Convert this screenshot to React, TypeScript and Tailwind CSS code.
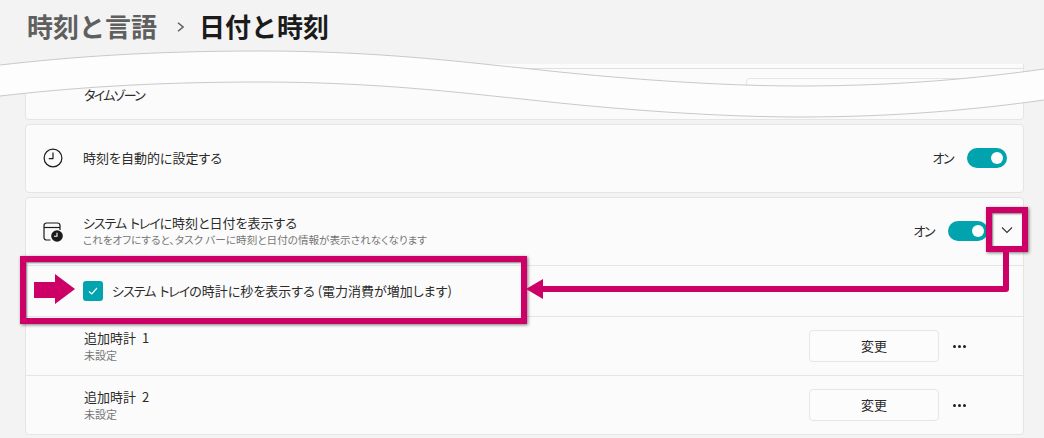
import { ReactNode } from "react";

const font = "font-['Noto_Sans_CJK_JP','Noto_Sans',sans-serif] [font-feature-settings:'palt']";

function Toggle() {
  return (
    <div className="w-10 h-5 rounded-full bg-[#00a3ae] flex items-center justify-end pr-1">
      <div className="w-3 h-3 rounded-full bg-white" />
    </div>
  );
}

function ClockIcon() {
  return (
    <svg width="20" height="20" viewBox="0 0 20 20" fill="none" stroke="#1b1b1b" strokeWidth="1.2">
      <circle cx="10" cy="10" r="8.9" />
      <path d="M10 4.5V10.6H5.8" strokeLinejoin="round" />
    </svg>
  );
}

function CalendarClockIcon() {
  return (
    <svg width="20" height="20" viewBox="0 0 20 20" fill="none" stroke="#1b1b1b" strokeWidth="1.2">
      <path d="M7.5 18H3.5A2.5 2.5 0 0 1 1 15.5V3.5A2.5 2.5 0 0 1 3.5 1H14.5A2.5 2.5 0 0 1 17 3.5V8" />
      <path d="M1 5.5H17" />
      <circle cx="14" cy="14" r="5.8" fill="#1b1b1b" stroke="none" />
      <path d="M14 10.8V14.3H11" stroke="#fff" strokeWidth="1.1" />
    </svg>
  );
}

function ClockRow({ label }: { label: ReactNode }) {
  return (
    <div className="h-[59px] flex items-center border-t border-[#e5e5e5] pl-[58px]">
      <div className="flex-1 -mt-[1px]">
        <div className="text-[13px] leading-[18px] text-[#2b2b2b]">{label}</div>
        <div className="text-[11px] leading-[16px] text-[#767676]">未設定</div>
      </div>
      <div className="w-[130px] h-8 rounded border border-[#e6e6e6] bg-[#fcfcfc] flex items-center justify-center text-[13px] text-[#2b2b2b]">
        変更
      </div>
      <div className="w-[13px] ml-[14px] mr-[57px] flex justify-between">
        <span className="w-[3px] h-[3px] rounded-full bg-[#1f1f1f]" />
        <span className="w-[3px] h-[3px] rounded-full bg-[#1f1f1f]" />
        <span className="w-[3px] h-[3px] rounded-full bg-[#1f1f1f]" />
      </div>
    </div>
  );
}

export default function App() {
  return (
    <div className={`relative w-[1044px] h-[438px] overflow-hidden bg-[#f3f3f3] ${font}`}>
      {/* Breadcrumb */}
      <div className="h-[64px] flex items-start pt-[7px] pl-[27px] text-[26px] leading-[38px] font-bold [font-feature-settings:normal]">
        <span className="text-[#5f5f5f]">時刻と言語</span>
        <svg className="ml-[20px] mr-[15px] mt-[15px]" width="7" height="10" viewBox="0 0 7 10" fill="none" stroke="#5f5f5f" strokeWidth="1.5">
          <path d="M1 .8L6 5L1 9.2" />
        </svg>
        <span className="text-[#1b1b1b]">日付と時刻</span>
      </div>

      <div className="ml-[25px] w-[999px] flex flex-col gap-[4px]">
        {/* Time zone card, cut off at the top */}
        <div className="h-[56px] bg-[#fbfbfb] border-x border-b border-[#e5e5e5] rounded-b">
          <div className="h-[5px] border-b border-[#e0e0e0]" />
          <div className="h-[50px] flex items-center pl-[58px] pr-[45px] justify-between">
            <span className="text-[13px] text-[#2b2b2b] tracking-[-1.7px] mt-[2px]">タイムゾーン</span>
            <div className="w-[232px] h-[30px] rounded border border-[#e5e5e5] bg-[#fcfcfc] -mt-[2px]" />
          </div>
        </div>

        {/* Automatic time */}
        <div className="h-[69px] bg-[#fbfbfb] border border-[#e5e5e5] rounded flex items-center pl-[17px] pr-[16px]">
          <div className="-mt-[2px]"><ClockIcon /></div>
          <span className="ml-[20px] flex-1 text-[13px] text-[#2b2b2b] -mt-[2px]">時刻を自動的に設定する</span>
          <span className="mr-[14px] text-[13px] text-[#2b2b2b] -mt-[2px] tracking-[-1.5px]">オン</span>
          <div className="-mt-[2px]"><Toggle /></div>
        </div>

        {/* System tray */}
        <div className="h-[238px] bg-[#fbfbfb] border border-[#e5e5e5] rounded flex flex-col">
          <div className="h-[67px] flex items-center pl-[17px]">
            <CalendarClockIcon />
            <div className="ml-[20px] flex-1 -mt-[2px]">
              <div className="text-[13px] leading-[18px] text-[#2b2b2b]">
                <span className="tracking-[-1.1px]">システム</span>
                <span className="ml-[4px] tracking-[-1.1px]">トレイ</span>に時刻と日付を表示する
              </div>
              <div className="text-[10.6px] leading-[15px] text-[#767676]">これをオフにすると、タスク バーに時刻と日付の情報が表示されなくなります</div>
            </div>
            <span className="mr-[14px] text-[13px] text-[#2b2b2b] -mt-[2px] tracking-[-1.5px]">オン</span>
            <div className="mr-[35px] -mt-[2px]"><Toggle /></div>
          </div>
          <div className="h-[51px] flex items-center border-t border-[#e5e5e5] pl-[57px]">
            <div className="w-5 h-5 rounded-[3px] bg-[#00a3ae] flex items-center justify-center">
              <svg width="12" height="12" viewBox="0 0 12 12" fill="none" stroke="#fff" strokeWidth="1.2">
                <path d="M2 6.5L4.8 9L10 3" />
              </svg>
            </div>
            <span className="ml-[9px] text-[13px] text-[#2b2b2b]">
              <span className="tracking-[-1px]">システム</span>
              <span className="ml-[4px] tracking-[-1px]">トレイ</span>の時計に秒を表示する (電力消費が増加します)
            </span>
          </div>
          <ClockRow label={<>追加時計 <span className="ml-[3px]">1</span></>} />
          <ClockRow label={<>追加時計 <span className="ml-[3px]">2</span></>} />
        </div>
      </div>

      {/* Torn paper band */}
      <svg className="absolute left-0 top-0 pointer-events-none" width="1044" height="130" viewBox="0 0 1044 130">
        <path
          d="M0 65C70 57 150 51 260 51C380 51 470 63 522 68C620 79 720 86 800 86C900 86 980 78 1044 69V100C980 109 900 117 800 117C720 117 620 110 522 99C470 94 380 82 260 82C150 82 70 88 0 96Z"
          fill="#fdfdfd"
        />
        <path d="M0 65C70 57 150 51 260 51C380 51 470 63 522 68C620 79 720 86 800 86C900 86 980 78 1044 69" fill="none" stroke="#c9c9c9" />
        <path d="M0 96C70 88 150 82 260 82C380 82 470 94 522 99C620 110 720 117 800 117C900 117 980 109 1044 100" fill="none" stroke="#c9c9c9" />
      </svg>

      {/* Annotations */}
      <div className="absolute left-[20px] top-[256px] w-[507px] h-[68px] border-[6px] border-[#cc0066] shadow-[1px_1px_3px_rgba(0,0,0,0.5),inset_1px_1px_2px_rgba(0,0,0,0.5)]" />
      <div className="absolute left-[986px] top-[207px] w-[42px] h-[45px] border-[6px] border-[#cc0066] shadow-[1px_1px_3px_rgba(0,0,0,0.5),inset_1px_1px_2px_rgba(0,0,0,0.5)] flex items-center justify-center">
        <svg width="12" height="8" viewBox="0 0 12 8" fill="none" stroke="#333" strokeWidth="1.1">
          <path d="M1 1.5L6 6.5L11 1.5" />
        </svg>
      </div>
      <svg className="absolute left-0 top-0 pointer-events-none" width="1044" height="438" viewBox="0 0 1044 438">
        <path d="M1006 252V289H540" fill="none" stroke="#cc0066" strokeWidth="6" strokeLinejoin="round" />
        <path d="M526 289L543 279V299Z" fill="#cc0066" />
        <path d="M34 282H55V274L75 289L55 304V298H34Z" fill="#cc0066" />
      </svg>
    </div>
  );
}
